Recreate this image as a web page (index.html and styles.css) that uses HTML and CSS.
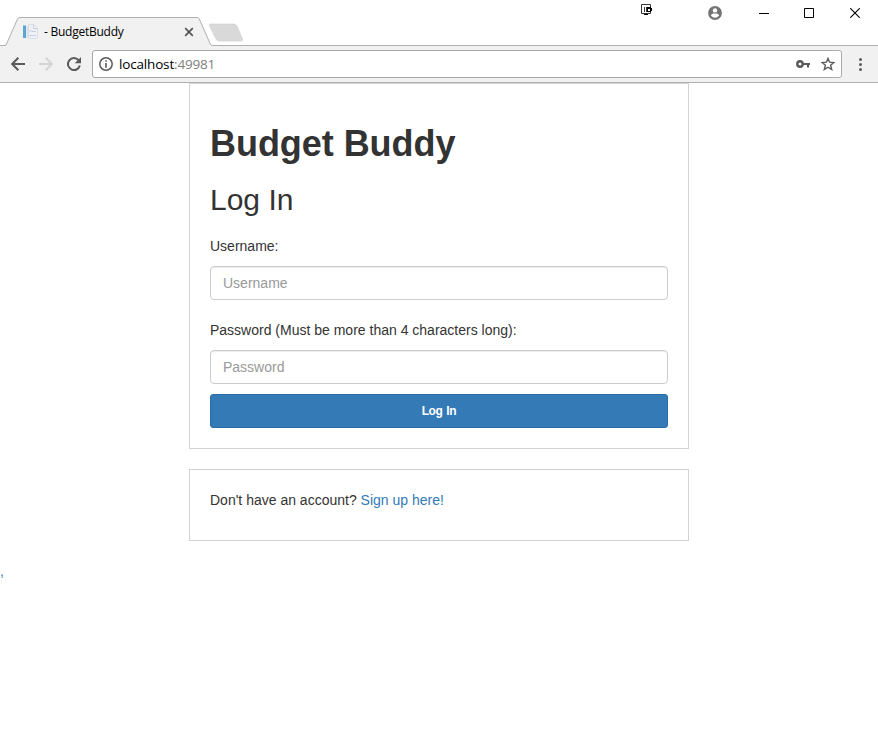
FILE: index.html
```html
<!DOCTYPE html>
<html lang="en">
<head>
<meta charset="utf-8">
<title>- BudgetBuddy</title>
<link rel="stylesheet" href="styles.css">
</head>
<body>
<header class="browser">
  <div class="tabstrip">
    <div class="tab">
      <svg class="tab-shape" width="250" height="30" viewBox="0 0 250 30">
        <path d="M0 28.500H5Q6 28.500 6.500 27L17.500 2Q18 .5 20 .5H197Q198.500 .5 199.300 2L210.300 27Q211 28.500 213 28.500H250V30H0Z" fill="#f1f1f1"/>
        <path d="M0 28.500H5Q6 28.500 6.500 27L17.500 2Q18 .5 20 .5H197Q198.500 .5 199.300 2L210.300 27Q211 28.500 213 28.500H250" fill="none" stroke="#b0b0b0"/>
        <path d="M210 7H234Q236 7 237 9L242.500 22Q243 24 241 24H219Q217 24 216 22L209.500 9Q209 7 210 7Z" fill="#d9d9d9" stroke="#cecece" stroke-width=".6"/>
      </svg>
      <svg class="favicon" width="16" height="16" viewBox="0 0 16 16">
        <path d="M0 1.500H3V14H0Z" fill="#5da4d4"/>
        <path d="M3.500 1.500H5V14H3.500Z" fill="#d9e2ea"/>
        <path d="M5.500 .5H11L14.500 4V14.500H5.500Z" fill="#eef1f5" stroke="#dbe0e6"/>
        <path d="M10.500 .5V4.500H14.500M6 7H9M9 7.500H13M6 11.500H13" fill="none" stroke="#c5d0dc"/>
      </svg>
      <span class="tab-title">- BudgetBuddy</span>
      <svg class="tab-close" width="10" height="10" viewBox="0 0 10 10"><path d="M1.200 1.200L8.800 8.800M8.800 1.200L1.200 8.800" stroke="#555" stroke-width="1.700"/></svg>
    </div>
    <div class="window-controls">
      <svg width="12" height="12" viewBox="0 0 12 12"><path d="M.5 .5H9.500V9.500H.5ZM3.500 3V8M5.500 3V8" fill="none" stroke="#333"/><path d="M3 10H7V11H3ZM6 3H10V4H11V7H10V8H6Z" fill="#000"/><path d="M7 5H9V7H7Z" fill="#fff"/></svg>
      <svg width="14" height="14" viewBox="0 0 14 14"><circle cx="7" cy="7" r="6.900" fill="#737373"/><circle cx="7" cy="4.400" r="2.200" fill="#fff"/><path d="M2.800 9.300C3.500 7.900 5.400 7.500 7 7.500S10.500 7.900 11.200 9.300C10.200 11 8.800 11.700 7 11.700S3.800 11 2.800 9.300Z" fill="#fff"/></svg>
      <svg width="10" height="10" viewBox="0 0 10 10"><path d="M0 5.500H10" stroke="#000"/></svg>
      <svg width="10" height="10" viewBox="0 0 10 10"><path d="M.5 .5H9.500V9.500H.5Z" fill="none" stroke="#000"/></svg>
      <svg width="10" height="10" viewBox="0 0 10 10"><path d="M.2 .2L9.800 9.800M9.800 .2L.2 9.800" stroke="#000" stroke-width="1.100"/></svg>
    </div>
  </div>
  <div class="toolbar">
    <svg class="back" width="14" height="14" viewBox="0 0 14 14"><path d="M14 7H1.500M7.300 .8L1.200 7L7.300 13.200" fill="none" stroke="#5a5a5a" stroke-width="2"/></svg>
    <svg class="forward" width="14" height="14" viewBox="0 0 14 14"><path d="M0 7H12.500M6.700 .8L12.800 7L6.700 13.200" fill="none" stroke="#d4d4d4" stroke-width="2"/></svg>
    <svg class="reload" width="14" height="14" viewBox="0 0 14 14"><path d="M11.600 3.200A6 6 0 1 0 12.800 8.500" fill="none" stroke="#5a5a5a" stroke-width="2"/><path d="M14 0V6.300H7.700Z" fill="#5a5a5a"/></svg>
    <div class="address">
      <svg class="info" width="14" height="14" viewBox="0 0 14 14"><circle cx="7" cy="7" r="6.200" fill="none" stroke="#5a5a5a" stroke-width="1.500"/><path d="M6.200 3.200H7.800V4.800H6.200ZM6.200 6H7.800V10.800H6.200Z" fill="#5a5a5a"/></svg>
      <span class="url">localhost<span class="port">:49981</span></span>
      <svg class="key" width="15" height="8" viewBox="0 0 15 8"><circle cx="4" cy="4" r="2.700" fill="none" stroke="#5a5a5a" stroke-width="2.400"/><path d="M7 3H14V5H13V7.500H11V5H7Z" fill="#5a5a5a"/></svg>
      <svg class="star" width="14" height="14" viewBox="0 0 14 14"><path d="M7 1.400L8.600 5.200L12.900 5.500L9.600 8.200L10.700 12.500L7 10.200L3.300 12.500L4.400 8.200L1.100 5.500L5.400 5.200Z" fill="none" stroke="#5a5a5a" stroke-width="1.400"/></svg>
    </div>
    <svg class="more" width="4" height="14" viewBox="0 0 4 14"><circle cx="2.500" cy="2.500" r="1.500" fill="#5a5a5a"/><circle cx="2.500" cy="7.500" r="1.500" fill="#5a5a5a"/><circle cx="2.500" cy="12.500" r="1.500" fill="#5a5a5a"/></svg>
  </div>
</header>
<main>
  <form class="card login">
    <h1>Budget Buddy</h1>
    <h2>Log In</h2>
    <label for="username">Username:</label>
    <input id="username" type="text" placeholder="Username">
    <label for="password">Password (Must be more than 4 characters long):</label>
    <input id="password" type="password" placeholder="Password">
    <button type="button">Log In</button>
  </form>
  <section class="card signup">Don't have an account? <a href="#">Sign up here!</a></section>
  <div class="stray">,</div>
</main>
</body>
</html>
```

FILE: styles.css
```css
* { box-sizing: border-box; }
body {
  margin: 0;
  background: #fff;
  color: #333;
  font: 14px/20px "Liberation Sans", Arial, sans-serif;
}
svg { display: block; flex: none; }

.browser { font-family: "Open Sans", "Noto Sans", sans-serif; }
.tabstrip {
  display: flex;
  justify-content: space-between;
  height: 46px;
  border-bottom: 1px solid #b0b0b0;
}
.tab {
  position: relative;
  display: flex;
  align-items: center;
  width: 212px;
  height: 29px;
  margin-top: 17px;
  padding-left: 23px;
}
.tab-shape { position: absolute; left: 0; top: 0; }
.favicon, .tab-title, .tab-close { position: relative; }
.tab-title {
  width: 140px;
  margin-left: 5px;
  color: #000;
  font-size: 12px;
  letter-spacing: -0.25px;
  white-space: nowrap;
}
.window-controls { display: flex; padding: 4px 18px 0 0; }
.window-controls svg:nth-child(2) { margin: 2px 0 0 55px; }
.window-controls svg:nth-child(3) { margin: 4px 0 0 37px; }
.window-controls svg:nth-child(4) { margin: 4px 0 0 35px; }
.window-controls svg:nth-child(5) { margin: 4px 0 0 36px; }

.toolbar {
  display: flex;
  align-items: center;
  height: 37px;
  padding: 0 16px 0 11px;
  background: #f1f1f1;
  border-bottom: 1px solid #b0b0b0;
}
.forward { margin-left: 14px; }
.reload { margin-left: 14px; }
.address {
  display: flex;
  align-items: center;
  flex: 1;
  height: 28px;
  margin: 0 16px 0 11px;
  padding: 0 6px;
  background: #fff;
  border: 1px solid #aaa;
  border-radius: 3px;
}
.url {
  flex: 1;
  margin-left: 6px;
  color: #000;
  font-size: 13.5px;
  letter-spacing: -0.17px;
}
.port { color: #808080; }
.key { margin-right: 10px; }

.card {
  width: 500px;
  margin: 0 auto 20px;
  padding: 20px;
  border: 1px solid #d3d3d3;
}
h1 { margin: 20px 0 19px; font-size: 36px; line-height: 39.6px; letter-spacing: -0.05px; }
h2 { margin: 0 0 20.4px; font-size: 30px; font-weight: 400; line-height: 33px; }
label { display: block; margin-bottom: 10px; }
input {
  display: block;
  width: 100%;
  height: 34px;
  padding: 6px 12px;
  border: 1px solid #ccc;
  border-radius: 4px;
  box-shadow: inset 0 1px 1px rgba(0, 0, 0, .075);
  font: inherit;
}
input::placeholder { color: #999; opacity: 1; }
#username { margin-bottom: 20px; }
button {
  display: block;
  width: 100%;
  height: 34px;
  margin-top: 10px;
  color: #fff;
  background: #337ab7;
  border: 1px solid #2e6da4;
  border-radius: 3px;
  font: bold 12px/18px "Liberation Sans", Arial, sans-serif;
  letter-spacing: -0.35px;
  word-spacing: 0.8px;
}
.signup { height: 72px; margin-bottom: 20px; }
a { color: #337ab7; text-decoration: none; }
.stray {
  color: #337ab7;
  font-size: 14px;
  line-height: 20px;
}
```
